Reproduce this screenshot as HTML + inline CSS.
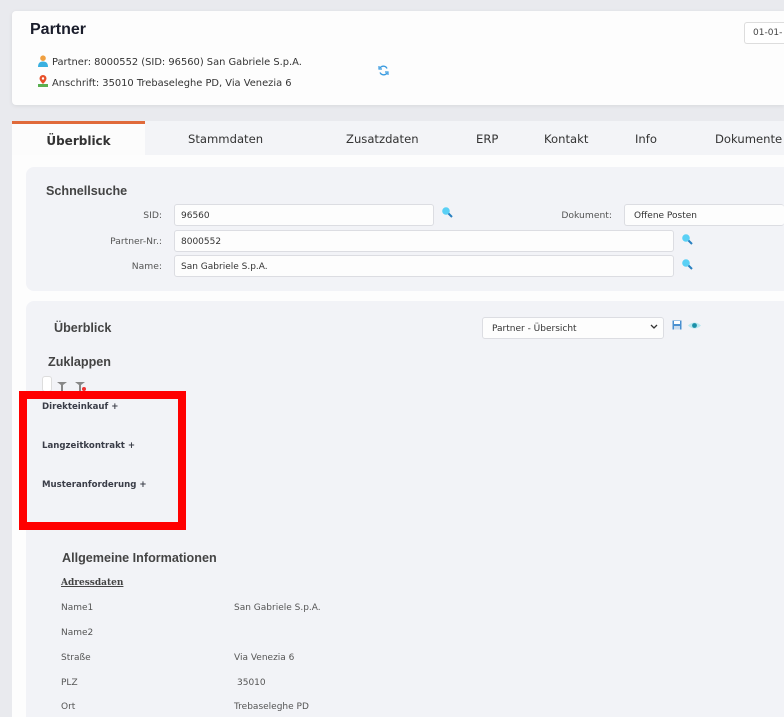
<!DOCTYPE html>
<html><head><meta charset="utf-8"><style>
*{box-sizing:border-box;margin:0;padding:0}
html,body{width:784px;height:717px;overflow:hidden}
body{background:#e9eaee;font-family:"DejaVu Sans","Liberation Sans",sans-serif;color:#333;position:relative}
.abs{position:absolute}
.card{left:12px;top:11px;width:772px;height:94px;background:#fdfdfd;border-radius:4px 0 0 4px;box-shadow:0 1px 4px rgba(0,0,0,.08)}
h1{position:absolute;left:30px;top:21px;font:bold 16px "Liberation Sans",sans-serif;color:#1a1d2b}
.info{font-size:9.9px;color:#333;white-space:nowrap}
.date{left:744px;top:22px;width:40px;height:22px;border:1px solid #ddd;border-right:none;border-radius:3px 0 0 3px;background:#fff;font-size:9px;padding:5px 8px;color:#444;overflow:hidden;white-space:nowrap}
.tabs{left:12px;top:121px;width:772px;height:34px;background:#f3f4f7;overflow:hidden}
.tab{position:absolute;top:0;height:34px;line-height:37px;font-size:11.6px;color:#333;white-space:nowrap}
.active{left:0;width:133px;background:#fcfcfc;border-top:3px solid #e06a3a;text-align:center;font-weight:bold;font-size:12px;line-height:35px}
.content{left:12px;top:155px;width:772px;height:562px;background:#fdfdfd}
.panel{background:#f2f3f7;border-radius:8px 0 0 8px}
.h2{font:bold 12.6px "Liberation Sans",sans-serif;color:#444}
.lbl{font-size:9.2px;color:#555;text-align:right;white-space:nowrap}
.inp{background:#fdfdfd;border:1px solid #dcdde2;border-radius:3px;height:22px;font-size:9px;padding:6px 6px;color:#333;white-space:nowrap}
.mag{width:12px;height:12px}
.red{left:19px;top:391px;width:167px;height:139px;border:8px solid #ff0000}
.bi{font-size:8.6px;font-weight:bold;color:#3a3d48;white-space:nowrap}
.row{font-size:9px;color:#555;white-space:nowrap}
</style></head><body>
<div class="abs card"></div>
<h1>Partner</h1>
<svg class="abs" style="left:38px;top:55px" width="10" height="12" viewBox="0 0 10 12"><circle cx="5" cy="3.2" r="2.8" fill="#f0a040"/><path d="M0 12 Q0 6.5 5 6.5 Q10 6.5 10 12Z" fill="#3ab0e0"/></svg>
<div class="abs info" style="left:52px;top:57px">Partner: 8000552 (SID: 96560) San Gabriele S.p.A.</div>
<svg class="abs" style="left:38px;top:75px" width="10" height="12" viewBox="0 0 10 12"><path d="M5 0 A3.5 3.5 0 0 1 8.5 3.5 Q8.5 5.5 5 9 Q1.5 5.5 1.5 3.5 A3.5 3.5 0 0 1 5 0Z" fill="#e8502a"/><circle cx="5" cy="3.5" r="1.2" fill="#fff"/><rect x="0" y="9" width="10" height="3" fill="#5ab050"/></svg>
<div class="abs info" style="left:52px;top:78px">Anschrift: 35010 Trebaseleghe PD, Via Venezia 6</div>
<svg class="abs" style="left:378px;top:65px" width="11" height="11" viewBox="0 0 11 11"><path d="M9 3.5A4 4 0 0 0 2 3M2 7.5A4 4 0 0 0 9 8" stroke="#3a9be0" stroke-width="1.4" fill="none"/><path d="M1 1v3h3M10 10V7H7" stroke="#3a9be0" stroke-width="1.2" fill="none"/></svg>
<div class="abs date">01-01-</div>

<div class="abs tabs">
<div class="tab active">Überblick</div>
<div class="tab" style="left:176px">Stammdaten</div>
<div class="tab" style="left:334px">Zusatzdaten</div>
<div class="tab" style="left:464px">ERP</div>
<div class="tab" style="left:532px">Kontakt</div>
<div class="tab" style="left:623px">Info</div>
<div class="tab" style="left:703px">Dokumente</div>
</div>
<div class="abs content"></div>

<div class="abs panel" style="left:26px;top:167px;width:758px;height:124px"></div>
<div class="abs h2" style="left:46px;top:184px">Schnellsuche</div>
<div class="abs lbl" style="left:60px;width:102px;top:210px">SID:</div>
<div class="abs inp" style="left:174px;top:204px;width:260px">96560</div>
<div class="abs lbl" style="left:60px;width:102px;top:236px">Partner-Nr.:</div>
<div class="abs inp" style="left:174px;top:230px;width:500px">8000552</div>
<div class="abs lbl" style="left:60px;width:102px;top:261px">Name:</div>
<div class="abs inp" style="left:174px;top:255px;width:500px">San Gabriele S.p.A.</div>
<div class="abs lbl" style="left:540px;width:72px;top:210px">Dokument:</div>
<div class="abs inp" style="left:624px;top:204px;width:160px;padding-left:9px;border-right:none">Offene Posten</div>
<svg class="abs mag" style="left:441px;top:206px" viewBox="0 0 12 12"><circle cx="5" cy="5" r="3.8" fill="#5ad0f5"/><path d="M7.5 7.5L11 11" stroke="#2a80c0" stroke-width="2"/></svg>
<svg class="abs mag" style="left:681px;top:233px" viewBox="0 0 12 12"><circle cx="5" cy="5" r="3.8" fill="#5ad0f5"/><path d="M7.5 7.5L11 11" stroke="#2a80c0" stroke-width="2"/></svg>
<svg class="abs mag" style="left:681px;top:258px" viewBox="0 0 12 12"><circle cx="5" cy="5" r="3.8" fill="#5ad0f5"/><path d="M7.5 7.5L11 11" stroke="#2a80c0" stroke-width="2"/></svg>

<div class="abs" style="left:26px;top:301px;width:758px;height:416px;background:#f2f3f7;border-radius:8px 0 0 0"></div>
<div class="abs h2" style="left:54px;top:321px">Überblick</div>
<div class="abs inp" style="left:482px;top:317px;width:182px;padding:6px 9px">Partner - Übersicht</div>
<svg class="abs" style="left:650px;top:324px" width="8" height="6" viewBox="0 0 8 6"><path d="M1 1l3 3 3-3" stroke="#333" stroke-width="1.3" fill="none"/></svg>
<svg class="abs" style="left:672px;top:320px" width="10" height="10" viewBox="0 0 10 10"><rect x="0.5" y="0.5" width="9" height="9" fill="#4a90d0"/><rect x="2" y="1" width="6" height="3" fill="#fff"/><rect x="2" y="6" width="6" height="3.5" fill="#cde"/></svg>
<svg class="abs" style="left:688px;top:321px" width="13" height="9" viewBox="0 0 13 9"><path d="M0 4.5Q6.5-1.5 13 4.5Q6.5 10.5 0 4.5Z" fill="#b8e8f0"/><circle cx="6.5" cy="4.5" r="2.4" fill="#1a90a8"/></svg>
<div class="abs h2" style="left:48px;top:355px">Zuklappen</div>
<div class="abs" style="left:42px;top:376px;width:10px;height:16px;background:#fff;border:1px solid #ddd;border-radius:3px"></div>
<svg class="abs" style="left:57px;top:381px" width="10" height="10" viewBox="0 0 10 10"><path d="M0 1h10L6 4v6H4V4Z" fill="#888"/></svg>
<svg class="abs" style="left:75px;top:381px" width="12" height="10" viewBox="0 0 12 10"><path d="M0 1h10L6 4v6H4V4Z" fill="#888"/><circle cx="9" cy="8" r="2" fill="#e33"/></svg>
<div class="abs red"></div>
<div class="abs bi" style="left:42px;top:402px">Direkteinkauf +</div>
<div class="abs bi" style="left:42px;top:441px">Langzeitkontrakt +</div>
<div class="abs bi" style="left:42px;top:480px">Musteranforderung +</div>

<div class="abs" style="left:62px;top:551px;font:bold 12.6px 'Liberation Sans',sans-serif;color:#444">Allgemeine Informationen</div>
<div class="abs" style="left:61px;top:578px;font:bold 9px 'DejaVu Serif','Liberation Serif',serif;color:#444;text-decoration:underline">Adressdaten</div>
<div class="abs row" style="left:61px;top:603px">Name1</div><div class="abs row" style="left:234px;top:603px">San Gabriele S.p.A.</div>
<div class="abs row" style="left:61px;top:628px">Name2</div>
<div class="abs row" style="left:61px;top:653px">Straße</div><div class="abs row" style="left:234px;top:653px">Via Venezia 6</div>
<div class="abs row" style="left:61px;top:678px">PLZ</div><div class="abs row" style="left:237px;top:678px">35010</div>
<div class="abs row" style="left:61px;top:702px">Ort</div><div class="abs row" style="left:234px;top:702px">Trebaseleghe PD</div>
</body></html>
